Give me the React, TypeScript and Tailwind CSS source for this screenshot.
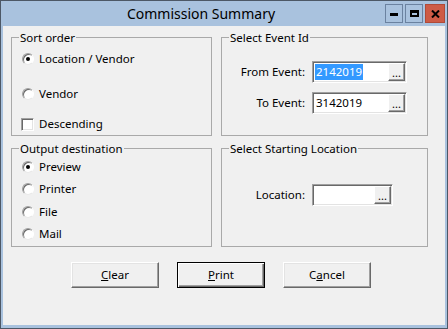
import React from 'react';

const font = { fontFamily: '"Noto Sans", "Open Sans", sans-serif' };

function Radio({ checked }: { checked?: boolean }) {
    return (
        <div className="w-[12px] h-[12px] rounded-full bg-white border border-t-[#a0a0a0] border-l-[#a0a0a0] border-r-white border-b-[#e8e8e8] shadow-[inset_1px_1px_0_#696969] flex items-center justify-center shrink-0">
            {checked && <div className="w-[4px] h-[4px] rounded-full bg-black" />}
        </div>
    );
}

function Checkbox() {
    return (
        <div className="w-[13px] h-[13px] bg-white border border-t-[#a0a0a0] border-l-[#a0a0a0] border-r-white border-b-white shadow-[inset_1px_1px_0_#696969,inset_-1px_-1px_0_#e3e3e3] shrink-0" />
    );
}

function Option({ label, checked }: { label: string; checked?: boolean }) {
    return (
        <div className="flex items-center h-[16px]">
            <Radio checked={checked} />
            <span className="ml-[5px] text-[11.5px] leading-[16px] text-black">{label}</span>
        </div>
    );
}

function LookupBox({ value, selected, width }: { value?: string; selected?: boolean; width: string }) {
    return (
        <div className={`${width} h-[22px] flex bg-white border border-t-[#a0a0a0] border-l-[#a0a0a0] border-r-white border-b-white shadow-[inset_1px_1px_0_#696969,inset_-1px_-1px_0_#e3e3e3] p-[1px]`}>
            <div className="flex-1 flex items-center pl-[1px]">
                {value && (
                    <span className={`text-[11.5px] leading-[16px] px-[1px] ${selected ? 'bg-[#3399ff] text-white' : 'text-black'}`}>{value}</span>
                )}
            </div>
            <div className="w-[17px] bg-[#f0f0f0] border border-t-white border-l-white border-r-[#696969] border-b-[#696969] shadow-[inset_-1px_-1px_0_#a0a0a0] flex items-end justify-center">
                <span className="text-[11px] leading-[14px] text-black">...</span>
            </div>
        </div>
    );
}

function Group({ title, children }: { title: string; children: React.ReactNode }) {
    return (
        <fieldset className="h-[106px] border border-[#a9a9a9] px-0 flex flex-col">
            <legend className="ml-[7px] px-[1px] text-[11.5px] leading-[15px] text-black">{title}</legend>
            {children}
        </fieldset>
    );
}

function DialogButton({ children, isDefault }: { children: React.ReactNode; isDefault?: boolean }) {
    return (
        <button
            className={
                isDefault
                    ? 'w-[88px] h-[26px] bg-[#f0f0f0] border border-black shadow-[inset_1px_1px_0_white,inset_-1px_-1px_0_#696969,inset_-2px_-2px_0_#a0a0a0] text-[11.5px] text-black'
                    : 'w-[88px] h-[26px] bg-[#f0f0f0] border border-t-white border-l-white border-r-[#696969] border-b-[#696969] shadow-[inset_-1px_-1px_0_#a0a0a0,inset_1px_1px_0_#e3e3e3] text-[11.5px] text-black'
            }
        >
            {children}
        </button>
    );
}

export default function App() {
    return (
        <div style={font} className="w-[448px] h-[329px] border border-[#4d5866] bg-[#a9c2de] flex flex-col px-[2px] pb-[3px]">
            {/* Title bar */}
            <div className="h-[25px] flex items-start -mx-[2px]">
                <div className="flex-1 pl-[16px] text-center text-[14px] leading-[26px] text-black">Commission Summary</div>
                <div className="flex gap-[2px] pt-[3px] pr-[2px]">
                    <div className="w-[18px] h-[19px] border border-[#6b82a0] flex items-center justify-center">
                        <div className="w-[8px] h-[3px] bg-black mt-[2px]" />
                    </div>
                    <div className="w-[18px] h-[19px] border border-[#6b82a0] flex items-center justify-center">
                        <div className="w-[9px] h-[7px] border-2 border-black border-t-[3px]" />
                    </div>
                    <div className="w-[20px] h-[19px] border border-[#b04a38] bg-[#cd5b46] flex items-center justify-center">
                        <svg width="9" height="8" viewBox="0 0 9 8">
                            <path d="M1 0.5 L8 7.5 M8 0.5 L1 7.5" stroke="black" strokeWidth="2" />
                        </svg>
                    </div>
                </div>
            </div>

            {/* Client area */}
            <div className="flex-1 bg-[#f0f0f0] pt-[4px] pl-[8px] flex flex-col">
                <div className="grid grid-cols-[201px_207px] gap-x-[9px] gap-y-[5px]">
                    <Group title="Sort order">
                        <div className="pl-[10px] flex flex-col">
                            <div className="mt-[6px]"><Option label="Location / Vendor" checked /></div>
                            <div className="mt-[19px]"><Option label="Vendor" /></div>
                            <div className="mt-[14px] flex items-center h-[16px] -ml-[1px]">
                                <Checkbox />
                                <span className="ml-[5px] text-[11.5px] leading-[16px] text-black">Descending</span>
                            </div>
                        </div>
                    </Group>

                    <Group title="Select Event Id">
                        <div className="flex flex-col">
                            <div className="mt-[16px] flex items-center">
                                <span className="w-[83px] text-right text-[11.5px] text-black">From Event:</span>
                                <div className="ml-[7px]"><LookupBox value="2142019" selected width="w-[95px]" /></div>
                            </div>
                            <div className="mt-[9px] flex items-center">
                                <span className="w-[83px] text-right text-[11.5px] text-black">To Event:</span>
                                <div className="ml-[7px]"><LookupBox value="3142019" width="w-[95px]" /></div>
                            </div>
                        </div>
                    </Group>

                    <Group title="Output destination">
                        <div className="pl-[10px] mt-[3px] flex flex-col gap-[6.33px]">
                            <Option label="Preview" checked />
                            <Option label="Printer" />
                            <Option label="File" />
                            <Option label="Mail" />
                        </div>
                    </Group>

                    <Group title="Select Starting Location">
                        <div className="mt-[28px] flex items-center">
                            <span className="w-[83px] text-right text-[11.5px] text-black">Location:</span>
                            <div className="ml-[7px]"><LookupBox width="w-[81px]" /></div>
                        </div>
                    </Group>
                </div>

                <div className="mt-[15px] ml-[60px] flex gap-[18px]">
                    <DialogButton><span className="underline">C</span>lear</DialogButton>
                    <DialogButton isDefault><span className="underline">P</span>rint</DialogButton>
                    <DialogButton>C<span className="underline">a</span>ncel</DialogButton>
                </div>
            </div>
        </div>
    );
}
